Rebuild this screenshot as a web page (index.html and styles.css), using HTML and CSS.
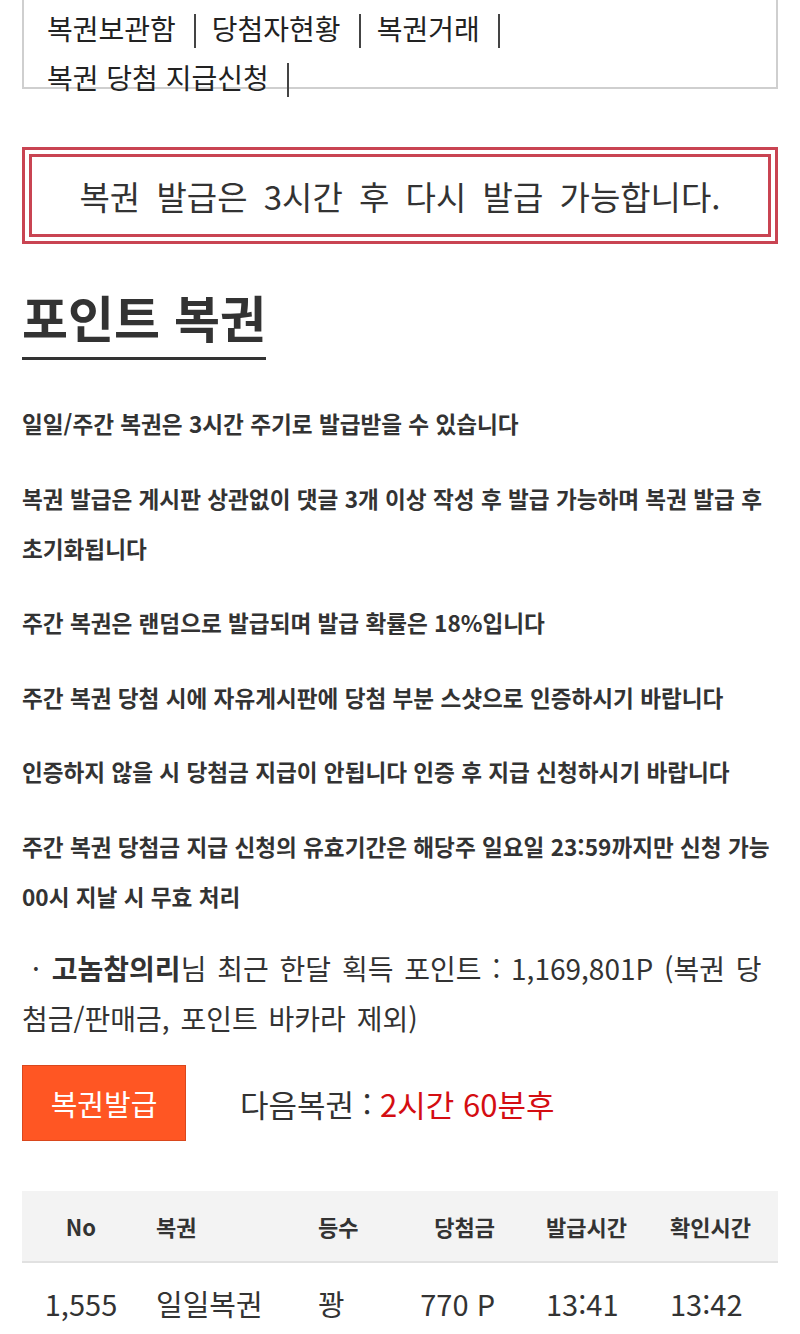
FILE: index.html
```html
<!DOCTYPE html>
<html lang="ko">
<head>
<meta charset="utf-8">
<title>포인트 복권</title>
<link rel="stylesheet" href="styles.css">
</head>
<body>
<div class="page">
  <div class="nav-box">
    <ul class="nav-list">
      <li>복권보관함<span class="sep"></span></li>
      <li>당첨자현황<span class="sep"></span></li>
      <li>복권거래<span class="sep"></span></li>
      <li>복권 당첨 지급신청<span class="sep"></span></li>
    </ul>
  </div>

  <div class="notice">복권 발급은 3시간 후 다시 발급 가능합니다.</div>

  <h1 class="title">포인트 복권</h1>

  <div class="rules">
    <p>일일/주간 복권은 3시간 주기로 발급받을 수 있습니다</p>
    <p>복권 발급은 게시판 상관없이 댓글 3개 이상 작성 후 발급 가능하며 복권 발급 후 초기화됩니다</p>
    <p>주간 복권은 랜덤으로 발급되며 발급 확률은 18%입니다</p>
    <p>주간 복권 당첨 시에 자유게시판에 당첨 부분 스샷으로 인증하시기 바랍니다</p>
    <p>인증하지 않을 시 당첨금 지급이 안됩니다 인증 후 지급 신청하시기 바랍니다</p>
    <p>주간 복권 당첨금 지급 신청의 유효기간은 해당주 일요일 23:59까지만 신청 가능 00시 지날 시 무효 처리</p>
  </div>

  <p class="points"><span class="dot">·</span><strong class="nick">고놈참의리</strong>님 최근 한달 획득 포인트 : 1,169,801P (복권 당첨금/판매금, 포인트 바카라 제외)</p>

  <div class="issue-row">
    <button class="issue-btn" type="button">복권발급</button>
    <span class="next">다음복권 : <em class="next-time">2시간 60분후</em></span>
  </div>

  <div class="table">
    <div class="thead">
      <div class="c c1">No</div>
      <div class="c c2">복권</div>
      <div class="c c3">등수</div>
      <div class="c c4">당첨금</div>
      <div class="c c5">발급시간</div>
      <div class="c c6">확인시간</div>
    </div>
    <div class="trow">
      <div class="c c1">1,555</div>
      <div class="c c2">일일복권</div>
      <div class="c c3">꽝</div>
      <div class="c c4">770 P</div>
      <div class="c c5">13:41</div>
      <div class="c c6">13:42</div>
    </div>
  </div>
</div>
</body>
</html>
```
FILE: styles.css
```css
html, body {
  margin: 0;
  padding: 0;
  background: #fff;
}
body {
  font-family: "Noto Sans CJK KR", "Noto Sans", sans-serif;
  color: #333;
}
.page {
  padding: 0 22px;
}

/* top navigation box */
.nav-box {
  border: 2px solid #cfcfcf;
  border-top: none;
  padding: 4px 0 0 23px;
  height: 83px;
}
.nav-list {
  list-style: none;
  margin: 0;
  padding: 0 60px 0 0;
  display: flex;
  flex-wrap: wrap;
  font-size: 28px;
  line-height: 49px;
  color: #222;
}
.nav-list li {
  white-space: nowrap;
  display: flex;
  align-items: center;
}
.sep {
  display: inline-block;
  width: 2px;
  height: 34px;
  margin: 4px 16px 0 18px;
  background: #444;
}

/* notice box */
.notice {
  margin-top: 58px;
  border: 10px double #c94452;
  height: 77px;
  display: flex;
  align-items: center;
  justify-content: center;
  font-size: 33px;
  word-spacing: 7px;
  color: #333;
}

/* title */
.title {
  display: inline-block;
  margin: 42px 0 0;
  padding-bottom: 11px;
  border-bottom: 3px solid #333;
  font-size: 50px;
  line-height: 60px;
  font-weight: 700;
  color: #333;
}

/* rules */
.rules {
  margin-top: 39px;
}
.rules p {
  margin: 0 0 24.5px;
  font-size: 22.6px;
  line-height: 50px;
  font-weight: 700;
  word-break: keep-all;
  color: #333;
}
.rules p:last-child {
  margin-bottom: 0;
}

/* points */
.points {
  margin: 21.5px 0 0;
  font-size: 28px;
  line-height: 50px;
  word-spacing: 3px;
  color: #333;
}
.nick {
  font-weight: 700;
}
.dot {
  margin: 0 12px 0 10px;
}

/* issue row */
.issue-row {
  margin-top: 22px;
  display: flex;
  align-items: center;
}
.issue-btn {
  width: 164px;
  height: 76px;
  background: #ff5623;
  border: 1px solid #d9471d;
  color: #fff;
  font-family: inherit;
  font-size: 29px;
  padding: 0;
  margin: 0;
}
.next {
  margin-left: 54px;
  font-size: 31px;
  color: #333;
}
.next-time {
  font-style: normal;
  color: #d40d12;
}

/* table */
.table {
  margin-top: 50px;
}
.thead, .trow {
  display: grid;
  grid-template-columns: 118px 161px 100px 115px 135px 1fr;
  align-items: center;
}
.thead {
  height: 70px;
  background: #f3f3f3;
  border-bottom: 2px solid #e1e1e1;
  font-size: 22px;
  font-weight: 700;
  color: #333;
}
.trow {
  height: 80px;
  font-size: 29px;
  color: #333;
}
.c1 { text-align: center; }
.c2 { padding-left: 16px; }
.c3 { padding-left: 17px; }
.c4 { text-align: right; padding-right: 21px; }
.c5 { padding-left: 30px; }
.c6 { padding-left: 19px; }
```
